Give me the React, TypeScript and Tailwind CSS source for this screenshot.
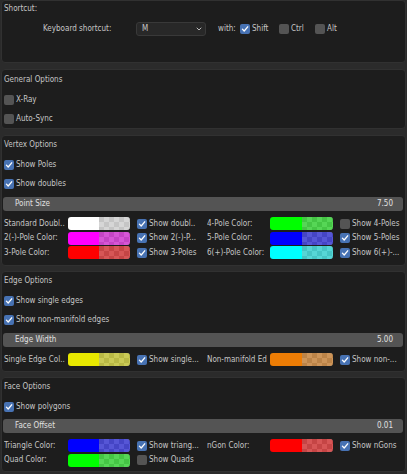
import clsx from "clsx";

type Cell = { label: string; color: string; toggle: string; on: boolean };

function Check({ on }: { on?: boolean }) {
  return (
    <span
      className={clsx(
        "flex h-[10px] w-[10px] shrink-0 items-center justify-center rounded-[2px]",
        on ? "bg-[#4772b3]" : "bg-[#545454]"
      )}
    >
      {on && (
        <svg width="8" height="8" viewBox="0 0 8 8">
          <path
            d="M1.4 4.1 3.2 6 6.7 1.8"
            fill="none"
            stroke="#ffffff"
            strokeWidth="1.3"
            strokeLinecap="round"
            strokeLinejoin="round"
          />
        </svg>
      )}
    </span>
  );
}

function Toggle({ label, on }: { label: string; on?: boolean }) {
  return (
    <div className="flex items-center gap-[2px] whitespace-nowrap">
      <Check on={on} />
      <span>{label}</span>
    </div>
  );
}

function Swatch({ color }: { color: string }) {
  return (
    <div className="flex h-[13px] w-full overflow-hidden rounded-[3px]">
      <div className="h-full w-1/2" style={{ backgroundColor: color }} />
      <div className="relative h-full w-1/2 bg-[repeating-conic-gradient(#adadad_0_25%,#8a8a8a_0_50%)] bg-[length:10px_10px]">
        <div className="absolute inset-0 opacity-50" style={{ backgroundColor: color }} />
      </div>
    </div>
  );
}

function Slider({ label, value }: { label: string; value: string }) {
  return (
    <div className="ml-[1px] mr-[2px] flex h-[14px] items-center justify-between rounded-[3px] bg-[#545454] pl-[12px] pr-[10px] text-[#e0e0e0]">
      <span>{label}</span>
      <span>{value}</span>
    </div>
  );
}

function ColorRow({ left, right }: { left: Cell; right?: Cell }) {
  return (
    <div className="flex h-[13px] items-center pl-[2px]">
      <span className="w-[64px] shrink-0 overflow-hidden whitespace-nowrap">{left.label}</span>
      <div className="w-[62px] shrink-0">
        <Swatch color={left.color} />
      </div>
      <div className="ml-[7px] w-[70px] shrink-0 overflow-hidden">
        <Toggle label={left.toggle} on={left.on} />
      </div>
      {right && (
        <>
          <span className="w-[63px] shrink-0 overflow-hidden whitespace-nowrap">{right.label}</span>
          <div className="w-[63px] shrink-0">
            <Swatch color={right.color} />
          </div>
          <div className="ml-[7px] shrink-0">
            <Toggle label={right.toggle} on={right.on} />
          </div>
        </>
      )}
    </div>
  );
}

function Panel({ className, children }: { className?: string; children: React.ReactNode }) {
  return (
    <div className={clsx("flex flex-col rounded-[4px] border border-[#313131] bg-[#1d1d1d]", className)}>
      {children}
    </div>
  );
}

function Title({ children }: { children: React.ReactNode }) {
  return <div className="h-[10px] pl-[2px] leading-[10px]">{children}</div>;
}

function Row({ children }: { children: React.ReactNode }) {
  return <div className="flex h-[19px] items-center pl-[2px]">{children}</div>;
}

const vertexRows: [Cell, Cell][] = [
  [
    { label: "Standard Doubl..", color: "#ffffff", toggle: "Show doubl..", on: true },
    { label: "4-Pole Color:", color: "#00ff00", toggle: "Show 4-Poles", on: false },
  ],
  [
    { label: "2(-)-Pole Color:", color: "#ff00ff", toggle: "Show 2(-)-P...", on: true },
    { label: "5-Pole Color:", color: "#0000ff", toggle: "Show 5-Poles", on: true },
  ],
  [
    { label: "3-Pole Color:", color: "#ff0000", toggle: "Show 3-Poles", on: true },
    { label: "6(+)-Pole Color:", color: "#00ffff", toggle: "Show 6(+)-...", on: true },
  ],
];

export default function App() {
  return (
    <div className="h-[474px] w-[407px] overflow-hidden bg-[#2b2b2b] px-[1px] font-['DejaVu_Sans_Condensed','Liberation_Sans',sans-serif] text-[8px] text-[#c6c6c6]">
      {/* Shortcut */}
      <Panel className="h-[63px] pt-[3px]">
        <Title>Shortcut:</Title>
        <div className="mt-[8px] flex h-[14px] items-center pl-[41px]">
          <span className="w-[93px] shrink-0">Keyboard shortcut:</span>
          <div className="flex h-[14px] w-[70px] shrink-0 items-center justify-between rounded-[3px] border border-[#393939] bg-[#282828] pl-[5px] pr-[3px]">
            <span>M</span>
            <svg width="6" height="6" viewBox="0 0 6 6">
              <path d="M1 2 3 4 5 2" fill="none" stroke="#bdbdbd" strokeWidth="1" strokeLinecap="round" />
            </svg>
          </div>
          <span className="ml-[12px] w-[22px] shrink-0">with:</span>
          <div className="w-[39px] shrink-0">
            <Toggle label="Shift" on />
          </div>
          <div className="w-[36px] shrink-0">
            <Toggle label="Ctrl" />
          </div>
          <Toggle label="Alt" />
        </div>
      </Panel>

      {/* General */}
      <Panel className="mt-[6px] h-[60px] pt-[5px]">
        <Title>General Options</Title>
        <div className="mt-[5px]">
          <Row>
            <Toggle label="X-Ray" />
          </Row>
          <Row>
            <Toggle label="Auto-Sync" />
          </Row>
        </div>
      </Panel>

      {/* Vertex */}
      <Panel className="mt-[6px] h-[131px] pt-[4px]">
        <Title>Vertex Options</Title>
        <div className="mt-[5px]">
          <Row>
            <Toggle label="Show Poles" on />
          </Row>
          <Row>
            <Toggle label="Show doubles" on />
          </Row>
        </div>
        <div className="mt-[4px]">
          <Slider label="Point Size" value="7.50" />
        </div>
        <div className="mt-[6px] flex flex-col gap-[1.5px]">
          {vertexRows.map(([l, r]) => (
            <ColorRow key={l.label} left={l} right={r} />
          ))}
        </div>
      </Panel>

      {/* Edge */}
      <Panel className="mt-[5px] h-[101px] pt-[4px]">
        <Title>Edge Options</Title>
        <div className="mt-[5px]">
          <Row>
            <Toggle label="Show single edges" on />
          </Row>
          <Row>
            <Toggle label="Show non-manifold edges" on />
          </Row>
        </div>
        <div className="mt-[4px]">
          <Slider label="Edge Width" value="5.00" />
        </div>
        <div className="mt-[6px]">
          <ColorRow
            left={{ label: "Single Edge Col..", color: "#e8e800", toggle: "Show single...", on: true }}
            right={{ label: "Non-manifold Ed", color: "#ed7d05", toggle: "Show non-...", on: true }}
          />
        </div>
      </Panel>

      {/* Face */}
      <Panel className="mt-[5px] h-[95px] pt-[4px]">
        <Title>Face Options</Title>
        <div className="mt-[5px]">
          <Row>
            <Toggle label="Show polygons" on />
          </Row>
        </div>
        <div className="mt-[3px]">
          <Slider label="Face Offset" value="0.01" />
        </div>
        <div className="mt-[6px] flex flex-col gap-[1.5px]">
          <ColorRow
            left={{ label: "Triangle Color:", color: "#0000ff", toggle: "Show triang...", on: true }}
            right={{ label: "nGon Color:", color: "#ff0000", toggle: "Show nGons", on: true }}
          />
          <ColorRow left={{ label: "Quad Color:", color: "#00ff00", toggle: "Show Quads", on: false }} />
        </div>
      </Panel>
    </div>
  );
}
